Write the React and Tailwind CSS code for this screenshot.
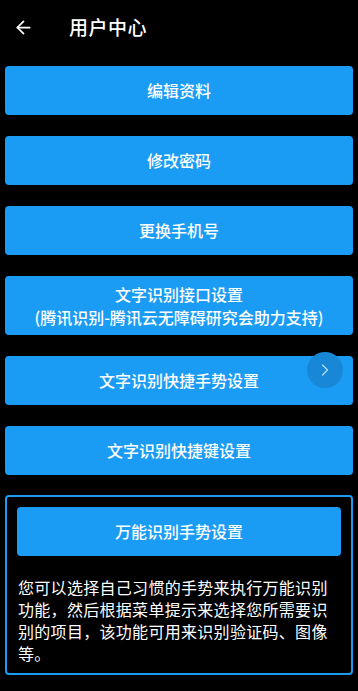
import { ArrowLeft, ChevronRight } from 'lucide-react';

const font = { fontFamily: '"Noto Sans CJK SC", "Noto Sans", sans-serif' };

function Btn({ children, className = '' }) {
  return (
    <button className={`w-full bg-[#1a9cf5] text-white text-[16px] font-medium rounded-[4px] flex flex-col items-center justify-center leading-[23px] ${className}`}>
      {children}
    </button>
  );
}

export default function App() {
  return (
    <div className="w-[358px] h-[691px] bg-black text-white overflow-hidden" style={font}>
      {/* Header */}
      <div className="h-[56px] flex items-center pl-[13px] pb-[2px]">
        <ArrowLeft size={21} strokeWidth={2} className="text-white" />
        <span className="ml-[35px] text-[19px] font-medium tracking-[0.5px]">用户中心</span>
      </div>

      <div className="px-[5px] pt-[10px] flex flex-col gap-[21px]">
        <Btn className="h-[49px]">编辑资料</Btn>
        <Btn className="h-[49px]">修改密码</Btn>
        <Btn className="h-[49px]">更换手机号</Btn>
        <Btn className="h-[59px]">
          <span>文字识别接口设置</span>
          <span>(腾讯识别-腾讯云无障碍研究会助力支持)</span>
        </Btn>
        <div className="relative">
          <Btn className="h-[49px]">文字识别快捷手势设置</Btn>
          <div className="absolute right-[10px] top-[-4px] w-[36px] h-[36px] rounded-full bg-[#1787d6] flex items-center justify-center">
            <ChevronRight size={20} strokeWidth={1.5} className="text-[#b5dcf7]" />
          </div>
        </div>
        <Btn className="h-[49px]">文字识别快捷键设置</Btn>

        <div className="border-2 border-[#1a9cf5] rounded-[4px] px-[10px] pt-[10px] pb-[9px] -mt-[1px]">
          <Btn className="h-[49px]">万能识别手势设置</Btn>
          <p className="mt-[20px] text-[16px] leading-[22px] tracking-[0.3px] pl-[1px]">
            您可以选择自己习惯的手势来执行万能识别功能，然后根据菜单提示来选择您所需要识别的项目，该功能可用来识别验证码、图像等。
          </p>
        </div>
      </div>
    </div>
  );
}
